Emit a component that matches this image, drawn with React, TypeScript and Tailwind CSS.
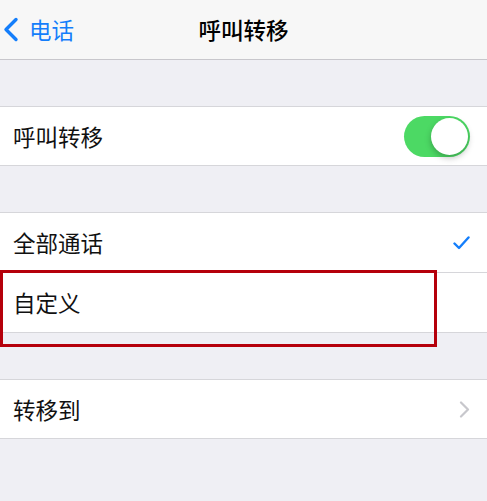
import React from "react";

const font = { fontFamily: '"Noto Sans CJK SC", "Noto Sans", sans-serif' };

function Row({ label, children, h = "h-[59px]" }: { label: string; children?: React.ReactNode; h?: string }) {
  return (
    <div className={`flex ${h} items-center justify-between border-b border-[#d6d6da] bg-white pl-[13px] pr-[15px]`}>
      <span className="text-[22.5px] leading-none text-[#111]">{label}</span>
      {children}
    </div>
  );
}

export default function App() {
  return (
    <div className="relative h-[501px] w-[487px] overflow-hidden bg-[#efeff4]" style={font}>
      {/* navigation bar */}
      <div className="relative flex h-[60px] items-center border-b border-[#c8c7cc] bg-[#f7f7f7]">
        <div className="flex items-center pl-[3px] text-[#147efb]">
          <svg width="16" height="25" viewBox="0 0 16 25" fill="none">
            <path d="M13 2.5L3 12.5L13 22.5" stroke="#147efb" strokeWidth="3.4" strokeLinecap="round" strokeLinejoin="round" />
          </svg>
          <span className="ml-[10px] text-[22.5px] leading-none">电话</span>
        </div>
        <div className="pointer-events-none absolute inset-x-0 top-0 flex h-full items-center justify-center">
          <span className="text-[22.5px] font-medium leading-none text-black">呼叫转移</span>
        </div>
      </div>

      <div className="h-[46px]" />

      <div className="border-t border-[#d6d6da]">
        <Row label="呼叫转移">
          <div className="relative mr-[2px] h-[41px] w-[66px] rounded-full bg-[#4cd964]">
            <div className="absolute right-[2px] top-[2px] h-[37px] w-[37px] rounded-full bg-white shadow-[0_3px_6px_rgba(0,0,0,0.25)]" />
          </div>
        </Row>
      </div>

      <div className="h-[46px]" />

      <div className="border-t border-[#d6d6da]">
        <Row label="全部通话" h="h-[60px]">
          <svg width="17" height="14" viewBox="0 0 17 14" fill="none" className="mr-[2px]">
            <path d="M1.5 7.5L6 12L15.5 1.5" stroke="#147efb" strokeWidth="2.4" strokeLinecap="round" strokeLinejoin="round" />
          </svg>
        </Row>
        <Row label="自定义" h="h-[60px]" />
      </div>

      <div className="h-[46px]" />

      <div className="border-t border-[#d6d6da]">
        <Row label="转移到">
          <svg width="11" height="17" viewBox="0 0 11 17" fill="none" className="mr-[2px]">
            <path d="M2 1.5L9 8.5L2 15.5" stroke="#c7c7cc" strokeWidth="2.2" strokeLinecap="round" strokeLinejoin="round" />
          </svg>
        </Row>
      </div>

      {/* highlight frame */}
      <div className="pointer-events-none absolute left-0 top-[270px] h-[77px] w-[437px] border-[3px] border-[#b5000b]" />
    </div>
  );
}
